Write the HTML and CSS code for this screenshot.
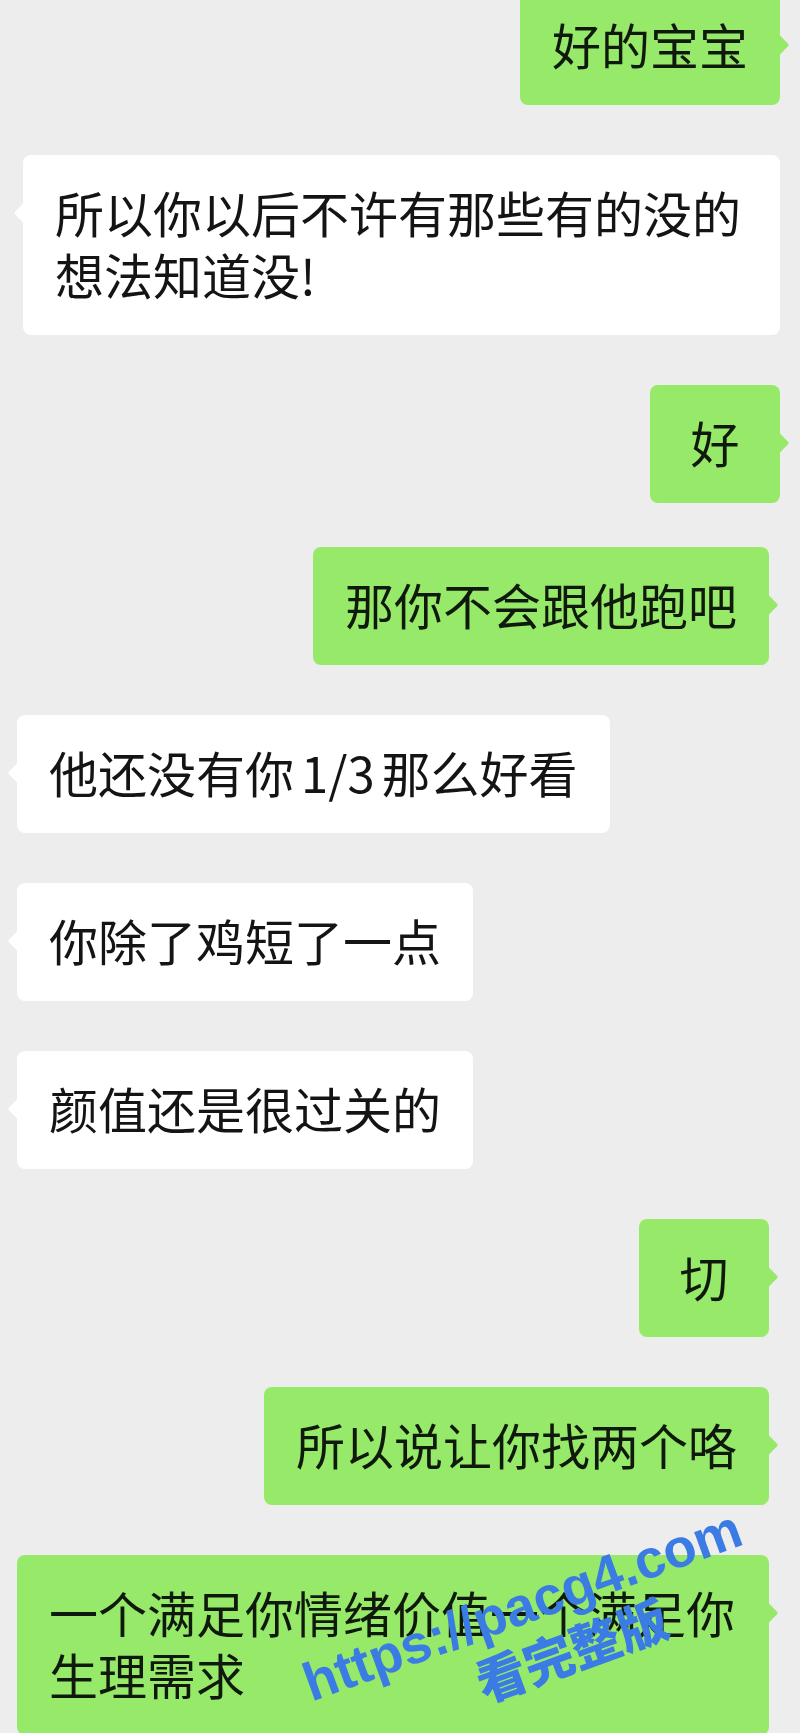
FILE: index.html
```html
<!DOCTYPE html>
<html lang="zh-CN">
<head>
    <meta charset="UTF-8">
    <meta name="viewport" content="width=device-width, initial-scale=1.0">
    <title>聊天记录</title>
    <link rel="stylesheet" href="styles.css">
</head>
<body>
    <!-- Chat log -->
    <div class="chat">
        <section class="part part-top">
            <div class="row me"><div class="bubble">好的宝宝</div></div>
            <div class="row other"><div class="bubble">所以你以后不许有那些有的没的想法知道没!</div></div>
            <div class="row me"><div class="bubble">好</div></div>
        </section>

        <section class="part part-bottom">
            <div class="row me"><div class="bubble">那你不会跟他跑吧</div></div>
            <div class="row other"><div class="bubble tight">他还没有你 1/3 那么好看</div></div>
            <div class="row other"><div class="bubble">你除了鸡短了一点</div></div>
            <div class="row other"><div class="bubble">颜值还是很过关的</div></div>
            <div class="row me"><div class="bubble">切</div></div>
            <div class="row me"><div class="bubble">所以说让你找两个咯</div></div>
            <div class="row me"><div class="bubble">一个满足你情绪价值一个满足你生理需求</div></div>
        </section>
    </div>

    <!-- Watermark over the last message -->
    <div class="watermark">
        <span class="wm-url">https://pacg4.com</span>
        <span class="wm-title">看完整版</span>
    </div>
</body>
</html>
```

FILE: styles.css
```css
/* Base */
* {
    margin: 0;
    padding: 0;
    box-sizing: border-box;
}

html, body {
    height: 1733px;
    overflow: hidden;
}

body {
    position: relative;
    background-color: #ededed;
    color: #141414;
    font-family: "Noto Sans CJK SC", "Noto Sans", sans-serif;
}

/* Chat layout */
.chat {
    display: flex;
    flex-direction: column;
    gap: 44px;
    margin-top: -13px;
}

.part {
    display: flex;
    flex-direction: column;
    gap: 50px;
}

.part-top {
    padding: 0 20px 0 23px;
}

.part-bottom {
    padding: 0 31px 0 17px;
}

.row {
    display: flex;
}

.row.me {
    justify-content: flex-end;
}

.row.other {
    justify-content: flex-start;
}

/* Bubbles */
.bubble {
    position: relative;
    display: flex;
    justify-content: center;
    min-width: 130px;
    max-width: 760px;
    padding: 26px 32px 30px;
    border-radius: 8px;
    font-size: 49px;
    line-height: 62px;
    background-color: #fff;
}

.bubble.tight {
    word-spacing: -4px;
}

.me .bubble {
    background-color: #97e96a;
    color: #0f1a0c;
}

.bubble::after {
    content: '';
    position: absolute;
    top: 50px;
    width: 16px;
    height: 16px;
    border-radius: 2px;
    background-color: inherit;
    transform: rotate(45deg);
}

.me .bubble::after {
    right: -6px;
}

.other .bubble::after {
    left: -6px;
}

/* Watermark */
.watermark span {
    position: absolute;
    color: #3b7ce4;
    font-weight: 900;
    white-space: nowrap;
    transform: translate(-50%, -50%) rotate(-20deg);
}

.wm-url {
    left: 522px;
    top: 1605px;
    font-family: "Liberation Sans", Arial, sans-serif;
    font-size: 54px;
}

.wm-title {
    left: 571px;
    top: 1648px;
    font-family: "Noto Sans CJK SC", sans-serif;
    font-size: 50px;
    transform: translate(-50%, -50%) rotate(-24deg);
}
```
